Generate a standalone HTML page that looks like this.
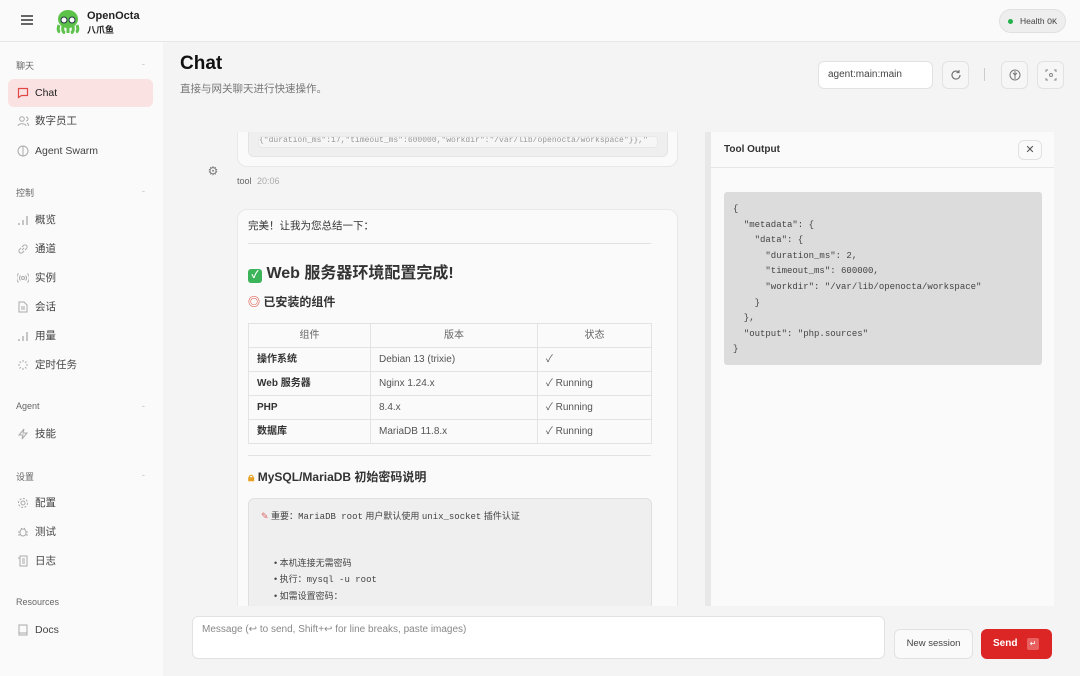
<!DOCTYPE html>
<html><head><meta charset="utf-8"><style>
*{box-sizing:border-box;margin:0;padding:0}
body{width:1080px;height:676px;overflow:hidden;background:#f4f4f4;font-family:"Liberation Sans","Noto Sans CJK SC",sans-serif;color:#333;position:relative;font-size:12px}
.abs{position:absolute}
.top{left:0;top:0;width:1080px;height:42px;background:#fafafa;border-bottom:1px solid #e6e6e6}
.side{left:0;top:42px;width:163px;height:634px;background:#fafafa}
.sec{position:absolute;left:16px;font-size:9px;color:#666}
.sec i{position:absolute;left:126px;color:#bbb;font-style:normal}
.it{position:absolute;left:8px;width:145px;height:28px;border-radius:6px;font-size:10.5px;color:#444;line-height:28px;padding-left:27px}
.it svg{position:absolute;left:9px;top:8px}
.mono{font-family:"Liberation Mono","Noto Sans CJK SC",monospace}
.btn{position:absolute;background:#f6f6f6;border:1px solid #e2e2e2;border-radius:6px}
table{border-collapse:collapse;font-size:10px}
td,th{border:1px solid #e3e3e3;height:24px;padding:0 8px;text-align:left;vertical-align:middle;line-height:23px}
td+td{color:#555}
th{font-weight:normal;text-align:center;color:#666}
</style></head><body>
<div class="abs top">
 <div class="abs" style="left:21px;top:15px;width:12px;height:1.5px;background:#666;box-shadow:0 4px 0 #666,0 8px 0 #666"></div>
 <svg class="abs" style="left:55px;top:9px" width="26" height="25" viewBox="0 0 26 25"><ellipse cx="13" cy="10" rx="10" ry="9" fill="#5cc24a"/><path d="M4 16 Q2 22 5 23 M8 17 Q7 23 10 24 M13 18 V24 M18 17 Q19 23 16 24 M22 16 Q24 22 21 23" stroke="#5cc24a" stroke-width="3" fill="none"/><circle cx="9" cy="11" r="3" fill="#fff" stroke="#234" stroke-width="1"/><circle cx="17" cy="11" r="3" fill="#fff" stroke="#234" stroke-width="1"/></svg>
 <div class="abs" style="left:87px;top:10px;font-size:11px;font-weight:bold;color:#222">OpenOcta</div>
 <div class="abs" style="left:87px;top:23px;font-size:9px;font-weight:bold;color:#222">八爪鱼</div>
 <div class="abs" style="left:999px;top:9px;width:67px;height:24px;border-radius:12px;background:#eee;border:1px solid #e0e0e0;font-size:8.5px;line-height:22px;padding-left:20px;color:#444">Health <span class="mono">OK</span><span class="abs" style="left:8px;top:9px;width:5px;height:5px;border-radius:50%;background:#22b14c"></span></div>
</div>
<div class="abs side">
 <div class="sec" style="top:17px">聊天<i>-</i></div>
 <div class="it" style="top:37px;background:#fbe2e2;color:#222">Chat<svg width="12" height="12" viewBox="0 0 12 12"><path d="M1.5 1.5h9v7h-6l-3 2z" fill="none" stroke="#e04848" stroke-width="1.2"/></svg></div>
 <div class="it" style="top:65px">数字员工<svg width="12" height="12"><circle cx="5" cy="4" r="2.3" fill="none" stroke="#aaa"/><path d="M1 11c0-3 8-3 8 0M9 2a2 2 0 010 4M10 8c1 .5 1.5 1.5 1.5 3" fill="none" stroke="#aaa"/></svg></div>
 <div class="it" style="top:95px">Agent Swarm<svg width="12" height="12"><circle cx="6" cy="6" r="5" fill="none" stroke="#aaa"/><path d="M6 1v10" stroke="#aaa"/></svg></div>
 <div class="sec" style="top:144px">控制<i>-</i></div>
 <div class="it" style="top:164px">概览<svg width="12" height="12"><path d="M2 11v-2M6 11V6M10 11V2" stroke="#aaa" stroke-width="1.3"/></svg></div>
 <div class="it" style="top:193px">通道<svg width="12" height="12"><path d="M5 7l2-2M4 5L2.5 6.5a2 2 0 003 3L7 8M8 7l1.5-1.5a2 2 0 00-3-3L5 4" fill="none" stroke="#aaa"/></svg></div>
 <div class="it" style="top:222px">实例<svg width="12" height="12"><circle cx="6" cy="6" r="1.5" fill="none" stroke="#aaa"/><path d="M3.5 3.5a3.5 3.5 0 000 5M8.5 3.5a3.5 3.5 0 010 5M1.5 1.5a6.5 6.5 0 000 9M10.5 1.5a6.5 6.5 0 010 9" fill="none" stroke="#aaa"/></svg></div>
 <div class="it" style="top:251px">会话<svg width="12" height="12"><path d="M2 1h5l3 3v7H2z M4 6h4M4 8h4" fill="none" stroke="#aaa"/></svg></div>
 <div class="it" style="top:280px">用量<svg width="12" height="12"><path d="M2 11v-2M6 11V6M10 11V2" stroke="#aaa" stroke-width="1.3"/></svg></div>
 <div class="it" style="top:309px">定时任务<svg width="12" height="12"><path d="M6 1v2M6 9v2M1 6h2M9 6h2M2.5 2.5l1.4 1.4M8.1 8.1l1.4 1.4M2.5 9.5l1.4-1.4M8.1 3.9l1.4-1.4" stroke="#aaa"/></svg></div>
 <div class="sec" style="top:359px">Agent<i>-</i></div>
 <div class="it" style="top:378px">技能<svg width="12" height="12"><path d="M7 1L2 7h4l-1 4 5-6H6z" fill="none" stroke="#aaa"/></svg></div>
 <div class="sec" style="top:428px">设置<i>-</i></div>
 <div class="it" style="top:447px">配置<svg width="12" height="12"><circle cx="6" cy="6" r="2" fill="none" stroke="#aaa"/><circle cx="6" cy="6" r="4.5" fill="none" stroke="#aaa" stroke-dasharray="2 1.5"/></svg></div>
 <div class="it" style="top:476px">测试<svg width="12" height="12"><rect x="3" y="3" width="6" height="7" rx="3" fill="none" stroke="#aaa"/><path d="M1 6h2M9 6h2M1 9h2M9 9h2M4 2l1 1M8 2L7 3" stroke="#aaa"/></svg></div>
 <div class="it" style="top:505px">日志<svg width="12" height="12"><path d="M3 1h7v10H3zM1 3h2M5 4h3M5 6h3M5 8h3" fill="none" stroke="#aaa"/></svg></div>
 <div class="sec" style="top:555px">Resources</div>
 <div class="it" style="top:574px">Docs<svg width="12" height="12"><path d="M2 1h8v10H2zM2 9h8" fill="none" stroke="#aaa"/></svg></div>
</div>

<div class="abs" style="left:180px;top:53px;font-size:19px;font-weight:bold;color:#111">Chat</div>
<div class="abs" style="left:180px;top:81px;font-size:10.5px;color:#777">直接与网关聊天进行快速操作。</div>
<div class="abs" style="left:818px;top:61px;width:115px;height:28px;background:#fff;border:1px solid #e2e2e2;border-radius:6px;font-size:10px;padding:7px 0 0 9px;color:#444">agent:main:main</div>
<div class="btn" style="left:942px;top:61px;width:27px;height:28px"><svg style="position:absolute;left:7px;top:7px" width="12" height="12"><path d="M10 6a4 4 0 11-1.2-2.8M9 1v2.5H6.5" fill="none" stroke="#777" stroke-width="1.2"/></svg></div>
<div class="abs" style="left:984px;top:68px;width:1px;height:13px;background:#ccc"></div>
<div class="btn" style="left:1001px;top:61px;width:27px;height:28px"><svg style="position:absolute;left:7px;top:7px" width="12" height="12"><circle cx="6" cy="6" r="5" fill="none" stroke="#777"/><path d="M6 2v8M4 4l2 2 2-2" fill="none" stroke="#777"/></svg></div>
<div class="btn" style="left:1037px;top:61px;width:27px;height:28px"><svg style="position:absolute;left:7px;top:7px" width="12" height="12"><path d="M1 3V1h2M9 1h2v2M11 9v2H9M3 11H1V9" fill="none" stroke="#888"/><circle cx="6" cy="6" r="1.5" fill="none" stroke="#888"/></svg></div>

<div class="abs" style="left:190px;top:132px;width:515px;height:474px;overflow:hidden">
 <div class="abs" style="left:47px;top:-20px;width:441px;height:55px;background:#fafafa;border:1px solid #e8e8e8;border-radius:10px">
  <div class="abs" style="left:10px;top:6px;width:420px;height:38px;background:#efefef;border-radius:6px;border:1px solid #e4e4e4"></div>
  <div class="abs mono" style="left:20px;top:23px;width:400px;height:12px;background:#f6f6f6;border:1px solid #e8e8e8;border-radius:4px;font-size:8px;color:#999;overflow:hidden;white-space:nowrap;line-height:8px">{"duration_ms":17,"timeout_ms":600000,"workdir":"/var/lib/openocta/workspace"}},"</div>
 </div>
 <div class="abs" style="left:10px;top:26px;width:26px;height:26px;color:#777;font-size:12px;text-align:center;line-height:26px">⚙</div>
 <div class="abs" style="left:47px;top:44px;font-size:9px;color:#666">tool <span style="color:#aaa;margin-left:3px">20:06</span></div>
 <div class="abs" style="left:47px;top:77px;width:441px;height:420px;background:#fafafa;border:1px solid #e8e8e8;border-radius:10px">
  <div class="abs" style="left:10px;top:8px;font-size:10.5px;color:#333">完美！让我为您总结一下：</div>
  <div class="abs" style="left:10px;top:33px;width:403px;height:1px;background:#e2e2e2"></div>
  <div class="abs" style="left:10px;top:49px;font-size:16px;font-weight:bold;color:#333"><span style="display:inline-block;width:14px;height:14px;background:#3cb55a;border-radius:3px;color:#fff;font-size:10px;text-align:center;line-height:14px;vertical-align:0">✓</span> Web 服务器环境配置完成!</div>
  <div class="abs" style="left:10px;top:83px;font-size:12px;font-weight:bold;color:#333"><span style="color:#d43">◎</span> 已安装的组件</div>
  <table class="abs" style="left:10px;top:113px;width:404px">
   <tr><th style="width:122px">组件</th><th style="width:167px">版本</th><th>状态</th></tr>
   <tr><td><b>操作系统</b></td><td>Debian 13 (trixie)</td><td>✓</td></tr>
   <tr><td><b>Web 服务器</b></td><td>Nginx 1.24.x</td><td>✓ Running</td></tr>
   <tr><td><b>PHP</b></td><td>8.4.x</td><td>✓ Running</td></tr>
   <tr><td><b>数据库</b></td><td>MariaDB 11.8.x</td><td>✓ Running</td></tr>
  </table>
  <div class="abs" style="left:10px;top:245px;width:403px;height:1px;background:#e2e2e2"></div>
  <div class="abs" style="left:10px;top:258px;font-size:12px;font-weight:bold;color:#333"><span style="color:#e8a020">🔒︎</span> MySQL/MariaDB 初始密码说明</div>
  <div class="abs" style="left:10px;top:288px;width:404px;height:140px;background:#efefef;border:1px solid #e0e0e0;border-radius:6px;font-size:9px;color:#444">
   <div class="abs" style="left:12px;top:10px"><span style="color:#d66">✎</span> 重要：<span class="mono">MariaDB root</span> 用户默认使用 <span class="mono">unix_socket</span> 插件认证</div>
   <div class="abs" style="left:25px;top:56px;line-height:16px">• 本机连接无需密码<br>• 执行：<span class="mono">mysql -u root</span><br>• 如需设置密码：<br><span class="mono" style="color:#999">  mysql -u root -e "SET PASSWORD = PASSWORD('your_password');"</span></div>
  </div>
 </div>
</div>
<div class="abs" style="left:705px;top:132px;width:6px;height:474px;background:#e8e8e8"></div>
<div class="abs" style="left:711px;top:132px;width:343px;height:474px;background:#fafafa">
 <div class="abs" style="left:13px;top:12px;font-size:10px;font-weight:bold;color:#333">Tool Output</div>
 <div class="btn" style="left:307px;top:8px;width:24px;height:20px;background:#fafafa;text-align:center;line-height:18px;font-size:11px;color:#555">✕</div>
 <div class="abs" style="left:0;top:35px;width:343px;height:1px;background:#e6e6e6"></div>
 <div class="abs mono" style="left:13px;top:60px;width:318px;height:173px;background:#dcdcdc;border-radius:3px;font-size:9px;color:#444;padding:10px 9px;line-height:15.6px;white-space:pre">{
  "metadata": {
    "data": {
      "duration_ms": 2,
      "timeout_ms": 600000,
      "workdir": "/var/lib/openocta/workspace"
    }
  },
  "output": "php.sources"
}</div>
</div>
<div class="abs" style="left:192px;top:616px;width:693px;height:43px;background:#fff;border:1px solid #e2e2e2;border-radius:6px;font-size:10px;color:#888;padding:7px 9px">Message (↩ to send, Shift+↩ for line breaks, paste images)</div>
<div class="btn" style="left:894px;top:629px;width:79px;height:30px;background:#fafafa;font-size:9.5px;line-height:28px;text-align:center;color:#444">New session</div>
<div class="abs" style="left:981px;top:629px;width:71px;height:30px;background:#dc2626;border-radius:6px;color:#fff;font-size:10px;font-weight:bold;line-height:30px;padding-left:12px">Send<span class="abs" style="left:46px;top:9px;width:12px;height:12px;background:#e86060;border-radius:2px;font-size:8px;line-height:12px;text-align:center;font-weight:normal">↵</span></div>
</body></html>
